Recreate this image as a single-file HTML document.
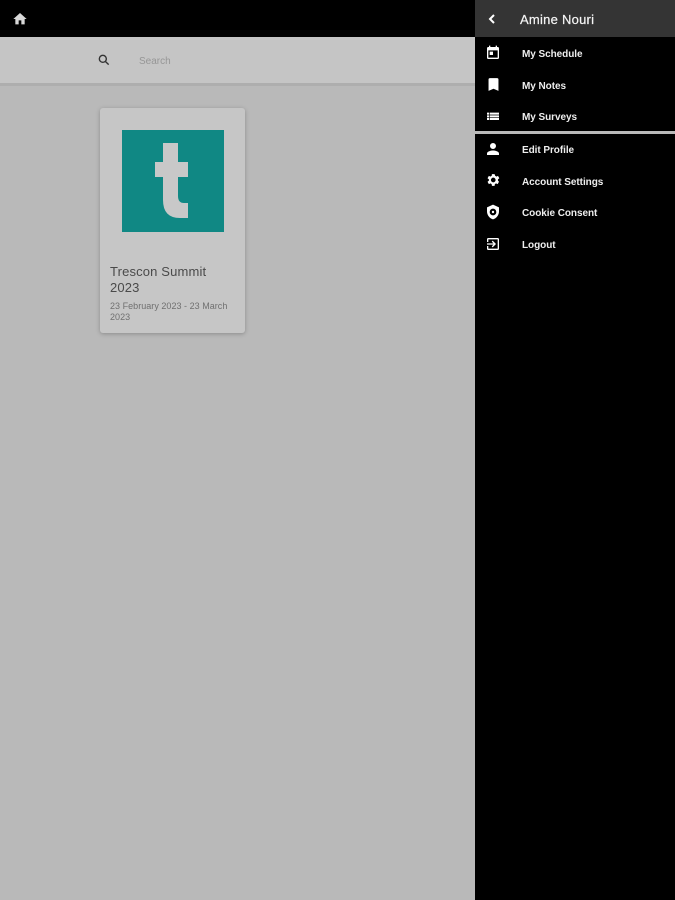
<!DOCTYPE html>
<html><head><meta charset="utf-8">
<style>
html,body{margin:0;padding:0;width:675px;height:900px;overflow:hidden;background:#b9b9b9;font-family:"Liberation Sans",sans-serif}
#wrap{position:absolute;left:0;top:0;width:675px;height:900px;filter:blur(.35px)}
.abs{position:absolute}
#top{left:0;top:0;width:475px;height:37px;background:#000}
#bar{left:0;top:37px;width:475px;height:46px;background:#c5c5c5}
#line{left:0;top:83px;width:475px;height:3px;background:#aeaeae}
#card{left:100px;top:108px;width:145px;height:225px;background:#c6c6c6;border-radius:3px;box-shadow:0 1px 4px rgba(0,0,0,.25)}
#logo{left:122px;top:130px;width:102px;height:102px;background:#108884}
#drawer{left:475px;top:0;width:200px;height:900px;background:#000}
#dh{left:475px;top:0;width:200px;height:37px;background:#343434}
#sep{left:475px;top:131px;width:200px;height:3px;background:#b9b9b9}
.m{position:absolute;left:522px;color:#eee;font-size:10px;font-weight:bold;line-height:14px;letter-spacing:-.06px;white-space:nowrap}
svg{position:absolute}
</style></head><body>
<div id="wrap">
<div class="abs" id="top"></div>
<div class="abs" id="bar"></div>
<div class="abs" id="line"></div>
<svg style="left:12px;top:11px" width="16" height="16" viewBox="0 0 24 24"><path fill="#d8d8d8" d="M10 20v-6h4v6h5v-8h3L12 3 2 12h3v8z"/></svg>
<svg style="left:97px;top:53px" width="14" height="14" viewBox="0 0 24 24"><path fill="none" stroke="#333" stroke-width="2.4" d="M10 4a6 6 0 1 0 0 12a6 6 0 1 0 0-12zM14.500 14.500L20 20"/></svg>
<div class="abs" style="left:139px;top:55px;font-size:10px;line-height:14px;color:#969696">Search</div>
<div class="abs" id="card"></div>
<div class="abs" id="logo"></div>
<svg style="left:122px;top:130px" width="102" height="102" viewBox="0 0 102 102"><path fill="#c8c8c8" d="M41 13H56V32H66V47H56V66Q56 73 62 73H66V88H58Q41 88 41 70V47H33V32H41Z"/></svg>
<div class="abs" style="left:110px;top:264px;width:130px;font-size:13px;line-height:16px;letter-spacing:.15px;color:#4a4a4a">Trescon Summit<br>2023</div>
<div class="abs" style="left:110px;top:301px;width:130px;font-size:9px;line-height:11px;letter-spacing:.03px;color:#707070">23 February 2023 - 23 March<br>2023</div>
<div class="abs" id="drawer"></div>
<div class="abs" id="dh"></div>
<div class="abs" id="sep"></div>
<svg style="left:485px;top:12px" width="14" height="14" viewBox="0 0 14 14"><path fill="none" stroke="#fff" stroke-width="2" d="M9 3L5 7L9 11"/></svg>
<div class="abs" style="left:520px;top:12px;font-size:13px;line-height:16px;letter-spacing:.25px;color:#f5f5f5;-webkit-text-stroke:.2px #f5f5f5">Amine Nouri</div>
<svg style="left:485px;top:45px" width="16" height="16" viewBox="0 0 24 24"><path fill="#fff" d="M19 3h-1V1h-2v2H8V1H6v2H5a2 2 0 0 0-2 2v14a2 2 0 0 0 2 2h14a2 2 0 0 0 2-2V5a2 2 0 0 0-2-2zm0 16H5V8h14zM7 10h5v5H7z"/></svg>
<div class="m" style="top:48px">My Schedule</div>
<svg style="left:485px;top:76px" width="17" height="17" viewBox="0 0 24 24"><path fill="#fff" d="M17 3H7a2 2 0 0 0-2 2v16l7-3 7 3V5a2 2 0 0 0-2-2z"/></svg>
<div class="m" style="top:80px">My Notes</div>
<svg style="left:485px;top:108px" width="16" height="16" viewBox="0 0 24 24"><path fill="#fff" d="M3 7h3v3H3zM3 11h3v3H3zM3 15h3v3H3zM7 7h14v3H7zM7 11h14v3H7zM7 15h14v3H7z"/></svg>
<div class="m" style="top:111px">My Surveys</div>
<svg style="left:484px;top:140px" width="18" height="18" viewBox="0 0 24 24"><path fill="#fff" d="M12 12a4 4 0 1 0 0-8 4 4 0 0 0 0 8zm0 2c-2.700 0-8 1.300-8 4v2h16v-2c0-2.700-5.300-4-8-4z"/></svg>
<div class="m" style="top:144px">Edit Profile</div>
<svg style="left:485px;top:172px" width="16" height="16" viewBox="0 0 24 24"><path fill="#fff" d="M19.400 13a7.500 7.500 0 0 0 0-2l2.100-1.600-2-3.500-2.500 1a7.300 7.300 0 0 0-1.700-1L14.400 3.200h-4l-.4 2.700a7.300 7.300 0 0 0-1.700 1l-2.500-1-2 3.500L5.900 11a7.500 7.500 0 0 0 0 2l-2.100 1.600 2 3.500 2.500-1c.5.400 1.100.7 1.700 1l.4 2.700h4l.4-2.700c.6-.3 1.200-.6 1.700-1l2.500 1 2-3.500zM12.400 15.500a3.500 3.500 0 1 1 0-7 3.500 3.500 0 0 1 0 7z"/></svg>
<div class="m" style="top:176px">Account Settings</div>
<svg style="left:485px;top:204px" width="16" height="16" viewBox="0 0 24 24"><path fill="#fff" fill-rule="evenodd" d="M12 1L3 5v6c0 5.500 3.800 10.700 9 12 5.200-1.300 9-6.500 9-12V5zM12 7a5 5 0 1 1 0 10 5 5 0 0 1 0-10z"/><circle cx="12" cy="12" r="1.800" fill="#fff"/></svg>
<div class="m" style="top:207px">Cookie Consent</div>
<svg style="left:485px;top:236px" width="16" height="16" viewBox="0 0 24 24"><path fill="#fff" d="M10.100 15.600L11.500 17l5-5-5-5-1.400 1.400 2.600 2.600H3v2h9.700zM19 3H5a2 2 0 0 0-2 2v4h2V5h14v14H5v-4H3v4a2 2 0 0 0 2 2h14a2 2 0 0 0 2-2V5a2 2 0 0 0-2-2z"/></svg>
<div class="m" style="top:239px">Logout</div>
</div>
</body></html>
